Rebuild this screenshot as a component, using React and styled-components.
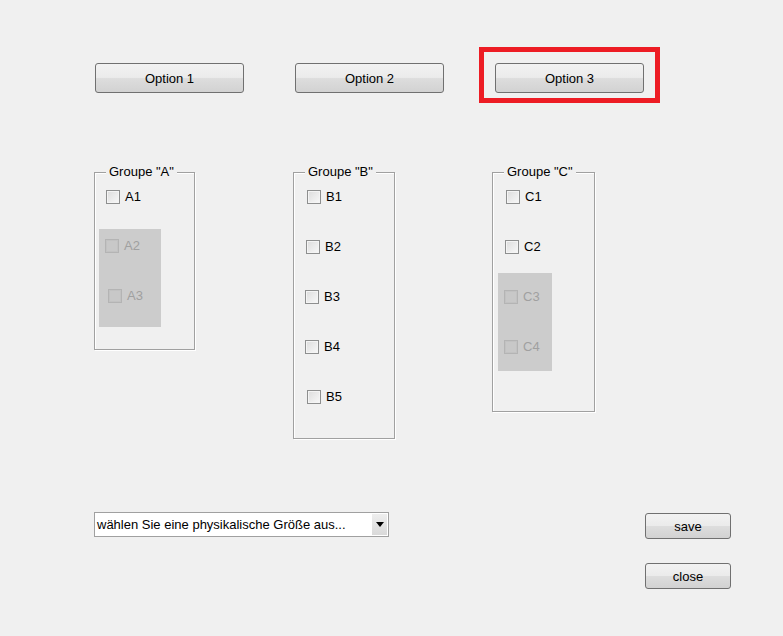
import styled, { createGlobalStyle, css } from "styled-components";

const groups = [
  {
    title: 'Groupe "A"',
    width: 101,
    height: 178,
    gapAfter: 98,
    items: [{ label: "A1", ml: 11, mt: 17 }],
    panel: {
      ml: 4,
      mt: 25,
      width: 62,
      items: [
        { label: "A2", ml: 6, mt: 10 },
        { label: "A3", ml: 9, mt: 36 },
      ],
    },
  },
  {
    title: 'Groupe "B"',
    width: 102,
    height: 267,
    gapAfter: 97,
    items: [
      { label: "B1", ml: 13, mt: 17 },
      { label: "B2", ml: 12, mt: 36 },
      { label: "B3", ml: 11, mt: 36 },
      { label: "B4", ml: 11, mt: 36 },
      { label: "B5", ml: 13, mt: 36 },
    ],
  },
  {
    title: 'Groupe "C"',
    width: 103,
    height: 240,
    gapAfter: 0,
    items: [
      { label: "C1", ml: 13, mt: 17 },
      { label: "C2", ml: 12, mt: 36 },
    ],
    panel: {
      ml: 5,
      mt: 19,
      width: 54,
      items: [
        { label: "C3", ml: 6, mt: 17 },
        { label: "C4", ml: 6, mt: 36 },
      ],
    },
  },
];

const CheckItem = ({ label, ml, mt, disabled }) => (
  <StCheck $ml={ml} $mt={mt} $disabled={disabled}>
    <StBox $disabled={disabled} />
    <span>{label}</span>
  </StCheck>
);

const App = () => {
  return (
    <>
      <GlobalStyle />
      <StPage>
        <StButtonRow>
          <StPushButton>Option 1</StPushButton>
          <StPushButton>Option 2</StPushButton>
          <StMarked>
            <StPushButton>Option 3</StPushButton>
          </StMarked>
        </StButtonRow>

        <StGroupRow>
          {groups.map((g) => (
            <StGroup key={g.title} $w={g.width} $h={g.height} $gap={g.gapAfter}>
              <StGroupTitle>{g.title}</StGroupTitle>
              {g.items.map((it) => (
                <CheckItem key={it.label} {...it} />
              ))}
              {g.panel && (
                <StDisabledPanel $ml={g.panel.ml} $mt={g.panel.mt} $w={g.panel.width}>
                  {g.panel.items.map((it) => (
                    <CheckItem key={it.label} {...it} disabled />
                  ))}
                </StDisabledPanel>
              )}
            </StGroup>
          ))}
        </StGroupRow>

        <StBottomRow>
          <StPopup>
            <span>wählen Sie eine physikalische Größe aus...</span>
            <StPopupArrow />
          </StPopup>
          <StSideButtons>
            <StPushButton $small>save</StPushButton>
            <StPushButton $small>close</StPushButton>
          </StSideButtons>
        </StBottomRow>
      </StPage>
    </>
  );
};
export default App;

const GlobalStyle = createGlobalStyle`
  html, body {
    margin: 0;
    padding: 0;
    background: #f0f0f0;
  }
`;

const StPage = styled.div`
  width: 783px;
  height: 636px;
  overflow: hidden;
  background: #f0f0f0;
  font-family: "Liberation Sans", Arial, sans-serif;
  font-size: 13px;
  color: #000;
`;

const StButtonRow = styled.div`
  display: flex;
  gap: 51px;
  padding: 63px 0 0 95px;
`;

const StPushButton = styled.div`
  box-sizing: border-box;
  width: 149px;
  height: 30px;
  border: 1px solid #707070;
  border-radius: 3px;
  background: linear-gradient(#f2f2f2 0%, #ebebeb 48%, #dddddd 52%, #d2d2d2 100%);
  display: flex;
  align-items: center;
  justify-content: center;
  font-size: 13px;
  color: #000;

  ${({ $small }) =>
    $small &&
    css`
      width: 86px;
      height: 26px;
    `}
`;

/* red frame drawn over the third option */
const StMarked = styled.div`
  position: relative;

  &::after {
    content: "";
    position: absolute;
    top: -16px;
    left: -16px;
    right: -16px;
    bottom: -10px;
    border: 5px solid #ed1c24;
  }
`;

const StGroupRow = styled.div`
  display: flex;
  align-items: flex-start;
  padding: 79px 0 0 94px;
`;

const StGroup = styled.div`
  position: relative;
  box-sizing: border-box;
  width: ${({ $w }) => $w}px;
  height: ${({ $h }) => $h}px;
  margin-right: ${({ $gap }) => $gap}px;
  border: 1px solid #a0a0a0;
  box-shadow: 1px 1px 0 #ffffff, inset 1px 1px 0 #ffffff;
  display: flex;
  flex-direction: column;
  align-items: flex-start;
`;

const StGroupTitle = styled.span`
  position: absolute;
  top: -9px;
  left: 11px;
  padding: 0 3px;
  line-height: 15px;
  background: #f0f0f0;
  white-space: nowrap;
`;

const StDisabledPanel = styled.div`
  box-sizing: border-box;
  width: ${({ $w }) => $w}px;
  height: 98px;
  margin: ${({ $mt }) => $mt}px 0 0 ${({ $ml }) => $ml}px;
  background: #cccccc;
  display: flex;
  flex-direction: column;
  align-items: flex-start;
`;

const StCheck = styled.div`
  display: flex;
  align-items: center;
  gap: 5px;
  height: 14px;
  line-height: 14px;
  margin: ${({ $mt }) => $mt}px 0 0 ${({ $ml }) => $ml}px;
  color: ${({ $disabled }) => ($disabled ? "#a0a0a0" : "#000")};
`;

const StBox = styled.span`
  box-sizing: border-box;
  width: 14px;
  height: 14px;
  border: 1px solid ${({ $disabled }) => ($disabled ? "#b4b4b4" : "#8e8f8f")};
  background: ${({ $disabled }) =>
    $disabled
      ? "#c8c8c8"
      : "linear-gradient(135deg, #dcdcdc 0%, #ececec 55%, #f8f8f8 100%)"};
  box-shadow: inset 0 0 0 1px
    ${({ $disabled }) => ($disabled ? "#c2c2c2" : "#f4f4f4")};
`;

const StBottomRow = styled.div`
  display: flex;
  justify-content: space-between;
  align-items: flex-start;
  padding: 73px 52px 0 94px;
`;

const StPopup = styled.div`
  box-sizing: border-box;
  width: 295px;
  height: 25px;
  border: 1px solid #a0a0a0;
  background: #fff;
  display: flex;
  align-items: stretch;
  justify-content: space-between;
  padding: 1px 1px 1px 2px;

  & > span {
    display: flex;
    align-items: center;
    white-space: nowrap;
  }
`;

const StPopupArrow = styled.div`
  width: 15px;
  background: linear-gradient(#eeeeee, #d9d9d9);
  display: flex;
  align-items: center;
  justify-content: center;

  &::before {
    content: "";
    border-left: 4px solid transparent;
    border-right: 4px solid transparent;
    border-top: 5px solid #000;
  }
`;

const StSideButtons = styled.div`
  display: flex;
  flex-direction: column;
  gap: 24px;
  padding-top: 1px;
`;
